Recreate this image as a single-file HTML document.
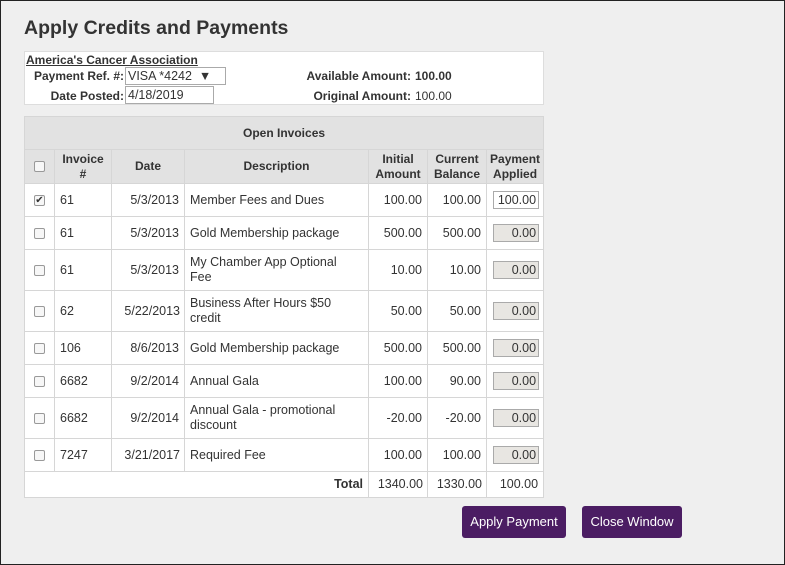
<!DOCTYPE html>
<html><head><style>
*{box-sizing:border-box}
body{margin:0;width:785px;height:565px;background:#efefef;font-family:"Liberation Sans",sans-serif;color:#333;overflow:hidden}
.frame{position:absolute;left:0;top:0;width:785px;height:565px;border:1px solid #222}
h1{position:absolute;left:24px;top:17px;margin:0;font-size:19.5px;font-weight:bold;color:#333}
.info{position:absolute;left:24px;top:51px;width:520px;height:54px;background:#fff;border:1px solid #ddd;font-size:12px}
.info a{position:absolute;left:1px;top:1px;font-weight:bold;text-decoration:underline;color:#333}
.lbl{position:absolute;font-weight:bold;text-align:right}
.inp{position:absolute;border:1px solid #aaa;background:#fff;padding-left:2px;height:18px;line-height:16px;font-size:12.5px}
table{position:absolute;left:24px;top:116px;width:519px;table-layout:fixed;border-collapse:collapse;font-size:12.5px;background:#fff}
td,th{border:1px solid #d6d6d6;padding:0 5px;line-height:15px}
th{background:#e2e2e2;font-weight:bold;text-align:center;font-size:12px}
td.r{text-align:right}
.cb{display:inline-block;width:11px;height:11px;border:1px solid #999;border-radius:2px;background:#f7f7f7;vertical-align:middle;position:relative}
.pa{display:inline-block;width:46px;height:18px;border:1px solid #aaa;background:#e8e6e2;text-align:right;padding-right:2px;line-height:16px}
.btn{position:absolute;top:506px;height:32px;background:#4b1d63;color:#fff;font-size:13px;border-radius:3px;text-align:center;line-height:32px}
</style></head><body>
<div class="frame"></div>
<h1>Apply Credits and Payments</h1>
<div class="info">
<a>America's Cancer Association</a>
<div class="lbl" style="left:4px;top:17px;width:95px">Payment Ref. #:</div>
<div class="inp" style="left:100px;top:15px;width:101px">VISA *4242 &nbsp;▼</div>
<div class="lbl" style="left:4px;top:37px;width:95px">Date Posted:</div>
<div class="inp" style="left:100px;top:34px;width:89px">4/18/2019</div>
<div class="lbl" style="left:230px;top:17px;width:156px">Available Amount:</div>
<div style="position:absolute;left:390px;top:17px;font-weight:bold">100.00</div>
<div class="lbl" style="left:230px;top:37px;width:156px">Original Amount:</div>
<div style="position:absolute;left:390px;top:37px">100.00</div>
</div>
<table>
<colgroup><col style="width:30px"><col style="width:57px"><col style="width:73px"><col style="width:184px"><col style="width:59px"><col style="width:59px"><col style="width:57px"></colgroup>
<tr style="height:33px"><th colspan="7">Open Invoices</th></tr>
<tr style="height:34px"><th style="padding:0"><span class="cb"></span></th><th style="padding:0">Invoice<br>#</th><th>Date</th><th>Description</th><th style="padding:0">Initial<br>Amount</th><th style="padding:0">Current<br>Balance</th><th style="padding:0">Payment<br>Applied</th></tr>
<tr style="height:33px"><td style="padding:0 9px"><span class="cb" style="font-size:10px;line-height:9px;text-align:center">✔</span></td><td>61</td><td class="r">5/3/2013</td><td>Member Fees and Dues</td><td class="r">100.00</td><td class="r">100.00</td><td class="r" style="padding:0 4px"><span class="pa" style="background:#fff">100.00</span></td></tr>
<tr style="height:33px"><td style="padding:0 9px"><span class="cb"></span></td><td>61</td><td class="r">5/3/2013</td><td>Gold Membership package</td><td class="r">500.00</td><td class="r">500.00</td><td class="r" style="padding:0 4px"><span class="pa">0.00</span></td></tr>
<tr style="height:41px"><td style="padding:0 9px"><span class="cb"></span></td><td>61</td><td class="r">5/3/2013</td><td>My Chamber App Optional<br>Fee</td><td class="r">10.00</td><td class="r">10.00</td><td class="r" style="padding:0 4px"><span class="pa">0.00</span></td></tr>
<tr style="height:41px"><td style="padding:0 9px"><span class="cb"></span></td><td>62</td><td class="r" style="padding:0 4px">5/22/2013</td><td>Business After Hours $50 credit</td><td class="r">50.00</td><td class="r">50.00</td><td class="r" style="padding:0 4px"><span class="pa">0.00</span></td></tr>
<tr style="height:33px"><td style="padding:0 9px"><span class="cb"></span></td><td>106</td><td class="r">8/6/2013</td><td>Gold Membership package</td><td class="r">500.00</td><td class="r">500.00</td><td class="r" style="padding:0 4px"><span class="pa">0.00</span></td></tr>
<tr style="height:33px"><td style="padding:0 9px"><span class="cb"></span></td><td>6682</td><td class="r">9/2/2014</td><td>Annual Gala</td><td class="r">100.00</td><td class="r">90.00</td><td class="r" style="padding:0 4px"><span class="pa">0.00</span></td></tr>
<tr style="height:41px"><td style="padding:0 9px"><span class="cb"></span></td><td>6682</td><td class="r">9/2/2014</td><td>Annual Gala - promotional discount</td><td class="r">-20.00</td><td class="r">-20.00</td><td class="r" style="padding:0 4px"><span class="pa">0.00</span></td></tr>
<tr style="height:33px"><td style="padding:0 9px"><span class="cb"></span></td><td>7247</td><td class="r" style="padding:0 4px">3/21/2017</td><td>Required Fee</td><td class="r">100.00</td><td class="r">100.00</td><td class="r" style="padding:0 4px"><span class="pa">0.00</span></td></tr>
<tr style="height:26px"><td colspan="4" class="r" style="font-weight:bold">Total</td><td class="r" style="padding:0 4px">1340.00</td><td class="r" style="padding:0 4px">1330.00</td><td class="r">100.00</td></tr>
</table>
<div class="btn" style="left:462px;width:104px">Apply Payment</div>
<div class="btn" style="left:582px;width:100px">Close Window</div>
</body></html>
